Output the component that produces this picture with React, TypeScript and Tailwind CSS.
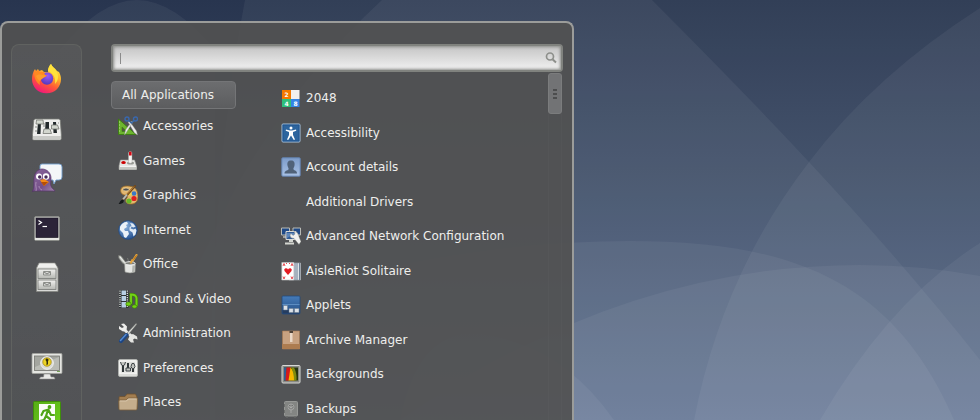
import type { ReactNode } from 'react';

interface Entry {
  label: string;
  icon?: ReactNode;
}

/* ---------- favourites (32px grid) ---------- */

const Firefox = (
  <>
    <defs>
      <linearGradient id="ff-body" x1="0.8" y1="0" x2="0.3" y2="1">
        <stop offset="0" stopColor="#fff14a" />
        <stop offset="0.35" stopColor="#ffb52a" />
        <stop offset="0.65" stopColor="#ff5a36" />
        <stop offset="1" stopColor="#f0147e" />
      </linearGradient>
      <radialGradient id="ff-globe" cx="0.55" cy="0.3" r="0.8">
        <stop offset="0" stopColor="#9a5cf5" />
        <stop offset="1" stopColor="#4b33b5" />
      </radialGradient>
    </defs>
    <path d="M1 17c0-4 1-7 3-10l1 2 2-2 1 2 3-1 2 2 4 0c0-3 1-6 3-8 1 3 4 4 6 7l2 1c1 2 2 4 2 7 0 8-6 14.300-14.500 14.300S1 25 1 17z" fill="url(#ff-body)" />
    <path d="M17 9c0-3 1-5 3-7 1 3 4 4 6 8 2 5 1 9-2 12 1-7-2-11-7-13z" fill="#ffe23c" />
    <circle cx="16" cy="16.500" r="6.200" fill="url(#ff-globe)" />
    <path d="M4 8l1 2 2-2 2 2 4 0 1 3h2c-1 2-4 2-5 4-2 1-3 3-2 6-4-3-7-8-5-15z" fill="#ff8a22" />
    <path d="M5 14c2-2 5-2 10 0-2 2-5 2-6 5-2-1-3-3-4-5z" fill="#ff9c2a" />
  </>
);

const Mixer = (
  <>
    <path d="M4.500 7h23q1.500 0 1.800 1.500l1 14v4q0 1.500-1.500 1.500h-26Q1.500 28 1.500 26.500v-4l1.300-14Q3 7 4.500 7z" fill="#eeeeec" stroke="#777a75" strokeWidth="0.8" />
    <path d="M2 24h28v2.500q0 1-1 1H3q-1 0-1-1z" fill="#c9cac7" />
    <path d="M7 10h3l-.5 12H6zM14.500 10h3.500v11h-4zM22 10h3l1 11h-3.500z" fill="#22292b" />
    <g fill="#d3d7cf" stroke="#777a75" strokeWidth="0.8">
      <path d="M5.500 8h6.500l.5 4H5zM13 17h6l1.500 4.500h-8.500zM20.500 13h6l1.500 4h-7.500z" />
    </g>
    <path d="M4 15l2 0M4 19h2M12 12h2M12 14h2M27 11h1" stroke="#888a85" />
  </>
);

const Pidgin = (
  <>
    <defs>
      <linearGradient id="pg-body" x1="0" y1="0" x2="1" y2="1">
        <stop offset="0" stopColor="#8a679a" />
        <stop offset="0.6" stopColor="#75508a" />
        <stop offset="1" stopColor="#a58bb1" />
      </linearGradient>
    </defs>
    <path d="M11 2h17q3 0 3 3v10q0 3-3 3h-3l-2 4-1-4H12q-3 0-3-3V4q0-2 2-2z" fill="#f4f6f8" stroke="#739fcf" strokeWidth="0.9" />
    <path d="M1.500 30c2-5 1-9 1.500-13 0-6 4-10 8-10 5 0 9 4 9 9 0 4-1 6 0 8 1 3 3 3 4 5H1.500z" fill="url(#pg-body)" stroke="#56356a" strokeWidth="0.7" />
    <circle cx="8" cy="14.500" r="3" fill="#fff" />
    <circle cx="15" cy="14.500" r="3.200" fill="#fff" />
    <circle cx="8.700" cy="15" r="1.700" fill="#452a57" />
    <circle cx="15" cy="15" r="1.700" fill="#452a57" />
    <path d="M9 18l4-1 5 3-5 4z" fill="#f58a16" />
    <path d="M10 20l7 0-4 4z" fill="#b54e08" />
    <path d="M5 20c-1 4 1 6 0 9M8 24c0 2 1 3 3 4" stroke="#b498bf" fill="none" strokeWidth="0.8" />
  </>
);

const Terminal = (
  <>
    <rect x="3.500" y="4.500" width="25" height="24" rx="1.500" fill="#c9cac7" stroke="#8b8d89" />
    <path d="M4 26h24v2H4z" fill="#e6e6e4" />
    <rect x="5" y="6" width="22" height="19.500" fill="#2b2338" stroke="#17121f" strokeWidth="0.6" />
    <path d="M7.500 8.500l3 2-3 2" stroke="#fff" fill="none" strokeWidth="1.200" />
    <path d="M11.500 14.500h4.500" stroke="#fff" strokeWidth="1.200" />
  </>
);

const Cabinet = (
  <>
    <defs>
      <linearGradient id="cab" x1="0" y1="0" x2="0" y2="1">
        <stop offset="0" stopColor="#f1f1ef" />
        <stop offset="1" stopColor="#b6b8b3" />
      </linearGradient>
    </defs>
    <path d="M8 1h16l3 5v23.500H5.500V6z" fill="#d8d9d6" stroke="#858782" strokeWidth="0.8" />
    <path d="M8.500 1.500h15l2.500 4H6.500z" fill="#f0f0ee" />
    <rect x="7" y="7" width="18" height="9.500" fill="url(#cab)" stroke="#777975" strokeWidth="0.8" />
    <rect x="7" y="18" width="18" height="9.500" fill="url(#cab)" stroke="#777975" strokeWidth="0.8" />
    <path d="M12.500 9.500h7v3.500h-7zM12.500 20.500h7V24h-7z" fill="#d5d6d3" stroke="#7b7d79" strokeWidth="0.8" />
    <path d="M13 10l3 2 3-2M13 21l3 2 3-2" stroke="#686a67" fill="none" strokeWidth="0.8" />
  </>
);

const LockScreen = (
  <>
    <rect x="1" y="4.500" width="30" height="20" rx="1" fill="#e4e5e1" stroke="#9fa19c" strokeWidth="0.8" />
    <rect x="3.500" y="7" width="25" height="14.500" fill="#a3a59f" stroke="#747671" strokeWidth="0.8" />
    <path d="M4 18L28 8v13H4z" fill="#b9bbb5" />
    <path d="M13 25h6l1 3h3l1 2H8.500l1-2h3z" fill="#e9e9e7" stroke="#8d8f8b" strokeWidth="0.6" />
    <circle cx="16" cy="14" r="6.300" fill="#d9dad6" stroke="#f3f3f1" />
    <circle cx="16" cy="13" r="4.200" fill="#edd426" stroke="#a88a0c" strokeWidth="0.8" />
    <path d="M14.500 11a1.500 1.500 0 1 1 2.500 1.300v3l-1.500 1v-3.500z" fill="#34300e" />
    <path d="M26 22.500h3" stroke="#6a994b" strokeWidth="0.9" />
  </>
);

const Logout = (
  <>
    <defs>
      <linearGradient id="exit" x1="0" y1="0" x2="1" y2="1">
        <stop offset="0" stopColor="#57ad17" />
        <stop offset="1" stopColor="#6ed01c" />
      </linearGradient>
    </defs>
    <rect x="2.500" y="2.500" width="27" height="27" rx="1" fill="url(#exit)" stroke="#3f8e0a" />
    <path d="M8 5h16v22H8z" fill="#fbfdf9" />
    <circle cx="18.500" cy="8" r="1.900" fill="#4fa515" />
    <path d="M17.500 10.500l-5 1.500-2 4M17 11l-2 6 4 3 0 6M15 17l-2 4-4 1M18 12l2 4 3 0" stroke="#4fa515" strokeWidth="2.200" fill="none" strokeLinecap="round" strokeLinejoin="round" />
  </>
);

/* ---------- categories (20px grid) ---------- */

const Accessories = (
  <>
    <path d="M.5 3v15.500H18z" fill="#6db52f" stroke="#3c7d12" strokeWidth="0.9" />
    <path d="M4 11v4.500h5z" fill="#50573f" stroke="#3c7d12" strokeWidth="0.6" />
    <path d="M1 6h1M1 9h1M1 12h1M1 15h1" stroke="#d5f0b8" strokeWidth="0.7" />
    <path d="M15.500 5L8 17l-1.500 2 1-5 6-8.500zM11.500 5l7 10 1 4-3-2-6.500-11z" fill="#eeeeec" stroke="#8f918d" strokeWidth="0.4" />
    <circle cx="9" cy="3" r="2" fill="none" stroke="#3968ae" strokeWidth="1.400" />
    <circle cx="17.500" cy="3" r="2" fill="none" stroke="#3968ae" strokeWidth="1.400" />
    <path d="M10.500 4.500l3 2.500 2.500-2.500" stroke="#3465a4" strokeWidth="1.300" fill="none" />
  </>
);

const Games = (
  <>
    <path d="M2.500 9h14l2 6v3.500H1V15z" fill="#e6e7e4" stroke="#9ea09c" strokeWidth="0.6" />
    <path d="M1 15h17.500v3.500H1z" fill="#c4c6c1" />
    <path d="M2 15.500h16" stroke="#fff" strokeWidth="0.8" />
    <ellipse cx="12.500" cy="12" rx="3.500" ry="1.500" fill="#969893" />
    <path d="M10.500 2q0-1.500 1.800-1.500T14 2v9.500q-1.700 1.500-3.500 0z" fill="#f4f4f2" stroke="#a1a39f" strokeWidth="0.4" />
    <path d="M11 1q1.300-1 2.600 0v3.500H11z" fill="#d40b16" />
    <ellipse cx="5.500" cy="11.500" rx="2.300" ry="1.500" fill="#cc0000" />
  </>
);

const Graphics = (
  <>
    <path d="M3 4c1-3 5-3.500 10-2.500 5 .5 7 5 7 10s-3 8-8 7.500c-5-.5-5-4-3-6 1-2-1-3-3-3C3 9 2 6 3 4z" fill="#e2b66f" stroke="#9b6b24" strokeWidth="0.8" />
    <ellipse cx="8" cy="4.500" rx="3" ry="1.500" fill="#4e5052" stroke="#f4d99f" strokeWidth="0.7" />
    <circle cx="16" cy="8.500" r="2.300" fill="#3979c8" />
    <circle cx="16" cy="13.500" r="2.600" fill="#dc2020" />
    <circle cx="11" cy="16" r="2.600" fill="#66b82a" />
    <circle cx="12" cy="9" r="1.700" fill="#f2d648" />
    <path d="M17 1L5 14.500" stroke="#72481a" strokeWidth="2" strokeLinecap="round" />
    <path d="M16 1.500L9 9.500" stroke="#d59a4a" strokeWidth="0.7" />
    <path d="M9 9.500l-4 5" stroke="#b9bcb7" strokeWidth="2" />
    <path d="M5.500 14.500c1 3-1 4.500-5 4.500 1.500-1 1-4 5-4.500z" fill="#171b1c" />
  </>
);

const Internet = (
  <>
    <defs>
      <radialGradient id="globe" cx="0.35" cy="0.3" r="0.8">
        <stop offset="0" stopColor="#8cb3df" />
        <stop offset="1" stopColor="#1d4a8a" />
      </radialGradient>
    </defs>
    <circle cx="10" cy="10" r="9.300" fill="url(#globe)" stroke="#204a87" strokeWidth="0.8" />
    <path d="M2 7c1-3 4-5 7-5.300L10 4 8 5l1 2-3 2 1 2 3 0 1 3-3 4-2-1-1-4-3-3z" fill="#eaf1f8" />
    <path d="M12 3l3 .5 2.500 3-2 1-2-1-1 2 3 1 2-1 1 2-1 4-2 2-1-4-3-2 0-3 2-2z" fill="#e1ebf5" />
  </>
);

const Office = (
  <>
    <path d="M.5 1.500q2-.5 3 1l4.500 6-1.500 2q-3-2-4-4Q0 4 .5 1.500z" fill="#bfc2bd" stroke="#72746f" strokeWidth="0.7" />
    <path d="M2 3l5 6" stroke="#f0f0ee" />
    <path d="M18.500 1l-6 9" stroke="#e0a13d" strokeWidth="2.200" strokeLinecap="round" />
    <path d="M18.500 1.500l-3 4" stroke="#b36b12" />
    <path d="M9.500 4l1.500 5" stroke="#777975" />
    <path d="M6.500 9q5.500-2 11 0l-.5 9q-5 2-10 0z" fill="#e4e5e2" stroke="#8d8f8a" strokeWidth="0.6" />
    <ellipse cx="12" cy="9.300" rx="5" ry="1.700" fill="#7c7e79" stroke="#fafafa" strokeWidth="0.8" />
    <path d="M12.500 9.500l2-4" stroke="#e0a13d" strokeWidth="2" />
    <path d="M14.500 11.500l-.5 7 2.500-1 .5-6z" fill="#b0b2ad" />
  </>
);

const SoundVideo = (
  <>
    <rect x="1" y="1" width="9.500" height="18" fill="#2e3436" />
    <path d="M3.500 1.500H8V6H3.500zM3.500 7H8v5H3.500zM3.500 13H8v5.500H3.500z" fill="#b7cfe5" />
    <path d="M2 1.500v17M9.300 1.500v17" stroke="#eeeeec" strokeWidth="1.200" strokeDasharray="1.200 1" />
    <path d="M13 15.500V5.500q5 0 5.500 3.500v8" stroke="#3c8205" strokeWidth="3.200" fill="none" />
    <path d="M13 15V5.500q5 0 5.500 3.500v8" stroke="#73d216" strokeWidth="1.900" fill="none" />
    <ellipse cx="10.500" cy="15" rx="2.700" ry="2" fill="#73d216" stroke="#3c8205" strokeWidth="0.7" />
    <ellipse cx="16.500" cy="17.500" rx="2.500" ry="1.700" fill="#73d216" stroke="#3c8205" strokeWidth="0.7" />
  </>
);

const Administration = (
  <>
    <path d="M5 5.500l11 10" stroke="#e7e8e6" strokeWidth="3" />
    <path d="M3 1l3-.5 3 3-.5 4-3.500 1-4-2.500V3l3 2 2-1z" fill="#eeeeec" />
    <path d="M12 12l3-1 4 2.500.5 3-3-1-1.500 1 1 3-3 0-3-3z" fill="#e3e4e1" />
    <path d="M19 1l-1-.5-9 9.500 1.500 1.500z" fill="#d5d7d3" stroke="#686b67" strokeWidth="0.5" />
    <path d="M8.500 12L3 18" stroke="#1d4684" strokeWidth="4" strokeLinecap="round" />
    <path d="M8 11.500l-5.500 6" stroke="#5489cf" strokeWidth="1.500" strokeLinecap="round" />
  </>
);

const Preferences = (
  <>
    <rect x=".5" y="1.500" width="19" height="17" rx="1.500" fill="#f0f0ee" stroke="#b4b6b2" strokeWidth="0.8" />
    <path d="M3 4h14v10.500H3z" fill="#dcddda" />
    <path d="M5 5v9M10 5v8M15 5v9" stroke="#303638" strokeWidth="2" />
    <path d="M2.500 4l1 3q1.500 1.500 3 0l1-3M8 13h4.500v-3H8zM13 8.500l1-3h2l1 3-1 2h-2z" fill="#c1c3bf" stroke="#41474a" />
    <path d="M1 17h18" stroke="#c8cac6" />
  </>
);

const Places = (
  <>
    <path d="M1 5.500q0-1 1-1h5l2-2.500h8q1 0 1 1l1 2V17H1z" fill="#a37e50" stroke="#6f522e" strokeWidth="0.8" />
    <path d="M2 8h6l2-2h8.500q1 0 1 1L19 17q0 1-1 1H2q-1 0-1-1L.8 9q0-1 1.200-1z" fill="#c4ad8c" stroke="#7b613f" strokeWidth="0.8" />
    <path d="M2 9h6.500l2-2H18.500" stroke="#e2d1b7" strokeWidth="0.7" fill="none" />
  </>
);

/* ---------- applications (20px grid) ---------- */

const G2048 = (
  <>
    <path d="M1 2h9v9H1z" fill="#f57900" />
    <path d="M10 2h8.500v9H10z" fill="#f2f0ee" />
    <path d="M1 11h9v8H1z" fill="#2fbf7c" />
    <path d="M10 11h8.500v8H10z" fill="#3584e4" />
    <g fill="#fff" className="font-['DejaVu_Sans',sans-serif] text-[6px] font-bold" textAnchor="middle">
      <text x="5.500" y="8.500">2</text>
      <text x="5.500" y="17.500">4</text>
      <text x="14.500" y="17.500">8</text>
    </g>
  </>
);

const Accessibility = (
  <>
    <rect x="1" y="1" width="18" height="18" rx="1" fill="#2d659e" stroke="#a7c3df" />
    <rect x="2" y="2" width="16" height="16" fill="none" stroke="#1d4f86" strokeWidth="0.7" />
    <circle cx="10" cy="5" r="1.500" fill="#fff" />
    <path d="M5 6.500l4 1h2l4-1 .3 1.200L12 9v3l2 4.500-1.200.5-2.800-4.500L7.200 17 6 16.500 8 12V9L4.700 7.700z" fill="#fff" />
  </>
);

const Account = (
  <>
    <defs>
      <linearGradient id="acct" x1="0" y1="0" x2="0" y2="1">
        <stop offset="0" stopColor="#7d9cca" />
        <stop offset="1" stopColor="#a8c1e5" />
      </linearGradient>
    </defs>
    <rect x=".8" y=".8" width="18.400" height="18.400" rx="1" fill="url(#acct)" stroke="#6382b0" />
    <path d="M10 3.500c3 0 4 2 3.500 5-.3 2-1.500 2.500-1 4 1 1 3.500 1 3.500 4H3.500c0-3 3-3 4-4 .5-1.500-.7-2-1-4-.5-3 .5-5 3.500-5z" fill="#506279" />
  </>
);

const Network = (
  <>
    <path d="M.5 2h8v7h-8zM12 2h7.500v7H12z" fill="#204a87" stroke="#b8bab5" />
    <path d="M2 11h3M13 10h5" stroke="#eeeeec" />
    <path d="M5 5.500h10v8H5z" fill="#315b95" stroke="#d9dad7" />
    <path d="M6 7h8v3q-4-1-8 2z" fill="#5d86bb" />
    <path d="M8 14h4v2H8zM4 16.500h9v2H4z" fill="#d3d5d0" />
    <path d="M10 7.500l2 2 2-1.500-1-2.500q4 0 4.500 4l2.500 6-2 3-5-6q-4 0-4-3.500z" fill="#f1f1ef" stroke="#777975" strokeWidth="0.4" />
  </>
);

const Solitaire = (
  <>
    <path d="M8 2h11.500v17H8z" fill="#dfe3e8" stroke="#a8afb6" strokeWidth="0.6" />
    <path d="M14 2v17M16 2v17M18.500 2v17" stroke="#60758b" strokeWidth="0.9" />
    <path d="M.8 1.500h12V19H.8z" fill="#fff" stroke="#c2c2c2" strokeWidth="0.6" />
    <path d="M7 14L3.500 10q-1-2 1-2.800Q6.500 7 7 8.500q.8-1.500 2.500-1.300 2 .8 1 2.800z" fill="#e51c23" />
    <path d="M2 5l1-2.500L4 5M10 5l1-2.500L12 5M2 15.500L3 18l1-2.500M10 15.500l1 2.500 1-2.500M5 2.500h1M8 2.500h1" stroke="#e5393f" fill="none" strokeWidth="0.9" />
  </>
);

const Applets = (
  <>
    <defs>
      <linearGradient id="applet" x1="0" y1="0" x2="0" y2="1">
        <stop offset="0" stopColor="#457bb8" />
        <stop offset="1" stopColor="#264f86" />
      </linearGradient>
    </defs>
    <rect x="1" y="1" width="18" height="18" rx="1" fill="url(#applet)" stroke="#244a7a" strokeWidth="0.8" />
    <path d="M1.500 9h17v1h-17z" fill="#5c8dc2" />
    <path d="M1.500 15h17v3.500h-17z" fill="#253d60" />
    <path d="M2.500 10.500h4v4.500h-4zM8 13.500h4.300v4H8zM13.500 13.500H18v4h-4.500z" fill="#dbe1e8" stroke="#6b7d91" strokeWidth="0.5" />
  </>
);

const Archive = (
  <>
    <path d="M1.500 1h17v18h-17z" fill="#c8a281" stroke="#aa7a51" strokeWidth="0.6" />
    <path d="M1 14h18v5H1z" fill="#ad7c50" />
    <path d="M9 1h2.500v11H9z" fill="#ead8c7" />
    <path d="M8.500 1h3.500v2H8.500z" fill="#4e4237" />
  </>
);

const Backgrounds = (
  <>
    <rect x="1" y="1.500" width="18" height="17.500" rx="1" fill="#888a85" stroke="#d8d9d6" />
    <path d="M3 3.500h14v13H3z" fill="#27350f" />
    <path d="M3 3.500h3l-1 13H3z" fill="#315d91" />
    <path d="M5.500 3.500H10l-2 13H4.500z" fill="#d61919" />
    <path d="M9.500 3.500q5 5 4 13h-6z" fill="#f6b900" />
    <path d="M10 3.500h3q3 6 2.500 13h-2.500q0-8-3-13z" fill="#7f8c10" />
  </>
);

const Backups = (
  <>
    <rect x="3.500" y="2.500" width="13" height="14.500" rx="1" fill="#838583" stroke="#969896" />
    <path d="M5 17h2v1.500H5zM13 17h2v1.500h-2zM3 5h1v3H3zM3 11h1v3H3z" fill="#6c6e6c" />
    <circle cx="10" cy="8" r="3" fill="#6f716f" stroke="#a8aaa8" strokeWidth="0.8" />
    <path d="M10 5v6M7.500 7l5 2.500M12.500 7l-5 2.500M10 11v3" stroke="#b1b3b1" strokeWidth="0.7" />
  </>
);

const favourites: Entry[] = [
  { label: 'Firefox', icon: Firefox },
  { label: 'System Settings', icon: Mixer },
  { label: 'Pidgin', icon: Pidgin },
  { label: 'Terminal', icon: Terminal },
  { label: 'Files', icon: Cabinet },
];

const session: Entry[] = [
  { label: 'Lock Screen', icon: LockScreen },
  { label: 'Logout', icon: Logout },
];

const categories: Entry[] = [
  { label: 'Accessories', icon: Accessories },
  { label: 'Games', icon: Games },
  { label: 'Graphics', icon: Graphics },
  { label: 'Internet', icon: Internet },
  { label: 'Office', icon: Office },
  { label: 'Sound & Video', icon: SoundVideo },
  { label: 'Administration', icon: Administration },
  { label: 'Preferences', icon: Preferences },
  { label: 'Places', icon: Places },
];

const applications: Entry[] = [
  { label: '2048', icon: G2048 },
  { label: 'Accessibility', icon: Accessibility },
  { label: 'Account details', icon: Account },
  { label: 'Additional Drivers' },
  { label: 'Advanced Network Configuration', icon: Network },
  { label: 'AisleRiot Solitaire', icon: Solitaire },
  { label: 'Applets', icon: Applets },
  { label: 'Archive Manager', icon: Archive },
  { label: 'Backgrounds', icon: Backgrounds },
  { label: 'Backups', icon: Backups },
];

function Wallpaper() {
  return (
    <svg viewBox="0 0 980 420" preserveAspectRatio="none" className="absolute inset-0 h-full w-full" aria-hidden="true">
      <defs>
        <linearGradient id="sky" x1="0" y1="0" x2="0" y2="1">
          <stop offset="0" stopColor="#28354f" />
          <stop offset="0.4" stopColor="#394963" />
          <stop offset="1" stopColor="#526688" />
        </linearGradient>
      </defs>
      <rect width="980" height="420" fill="url(#sky)" />
      <g fill="#fff" fillOpacity="0.05">
        <path d="M245 0Q210 180 210 420H980V0z" />
        <path d="M60 50Q100 0 137 0T215 50V420H60z" />
        <path d="M382 0Q300 75 240 180L120 420H980V360Q905 265 809 162Q740 88 652 0z" />
        <path d="M980 8Q875 75 809 162Q722 275 694 420H980z" />
        <path d="M300 290Q470 241 630 241C800 241 895 285 954 420H300z" />
        <path d="M400 420Q620 265 860 265Q920 265 980 276V420z" />
        <path d="M980 243Q890 300 820 420H980z" />
        <path d="M400 420Q420 320 490 335Q565 350 614 420z" />
      </g>
    </svg>
  );
}

function SideButton({ entry }: { entry: Entry }) {
  return (
    <button type="button" aria-label={entry.label} className="size-8">
      <svg viewBox="0 0 32 32" className="size-8">{entry.icon}</svg>
    </button>
  );
}

function MenuList({ entries }: { entries: Entry[] }) {
  return (
    <ul>
      {entries.map(entry => (
        <li key={entry.label} className="h-[34px] even:h-[35px]">
          <button type="button" className="flex h-full w-full items-center gap-[5px] whitespace-nowrap text-left">
            <svg viewBox="0 0 20 20" className="size-5 shrink-0" aria-hidden="true">{entry.icon}</svg>
            {entry.label}
          </button>
        </li>
      ))}
    </ul>
  );
}

export default function App() {
  return (
    <main className="relative h-screen overflow-hidden bg-[#526688] pt-[21px] font-['DejaVu_Sans',sans-serif] text-xs text-[#eeeeec]">
      <Wallpaper />

      <div className="relative flex min-h-full w-[574px] max-w-full items-stretch rounded-t-lg border-2 border-b-0 border-[#9b9c9a] bg-[#515151]/92 pt-[21px] pr-[9px] pl-[9px]">
        <nav aria-label="Favorites" className="flex w-[71px] shrink-0 flex-col items-center gap-[18px] rounded-t-lg border border-b-0 border-[#606260] bg-linear-to-b from-white/4 to-white/0 pt-[17px]">
          {favourites.map(entry => <SideButton key={entry.label} entry={entry} />)}
          <div className="mt-[37px] flex flex-col gap-[18px]">
            {session.map(entry => <SideButton key={entry.label} entry={entry} />)}
          </div>
        </nav>

        <section className="ml-[29px] flex min-w-0 flex-1 flex-col">
          <label className="flex h-7 shrink-0 items-center rounded border-2 border-[#80827e] bg-linear-to-b from-[#c4c4c4] to-[#f2f2f2] pr-1 pl-[7px] shadow-[inset_0_0_3px_1px_#8a8c88]">
            <span className="h-[11px] w-px bg-[#8b8b8b]" />
            <input type="text" aria-label="Search applications" className="min-w-0 flex-1 bg-transparent px-1 text-[#444] outline-none" />
            <svg viewBox="0 0 12 12" className="size-3" fill="none" stroke="#8d8f8b" aria-hidden="true">
              <circle cx="5" cy="4.500" r="3.500" strokeWidth="1.700" />
              <path d="M7.500 7.200l3.500 3.300" strokeWidth="2" />
            </svg>
          </label>

          <div className="flex flex-1">
            <div className="w-[125px] shrink-0 pt-[9px]">
              <button type="button" className="h-7 w-full rounded border border-[#747577] bg-linear-to-b from-[#6c6d6f] to-[#5c5d5f] pl-[10px] text-left">
                All Applications
              </button>
              <div className="pl-[7px]">
                <MenuList entries={categories} />
              </div>
            </div>

            <div className="ml-[45px] min-w-0 flex-1 pt-[9px]">
              <MenuList entries={applications} />
            </div>

            <div className="mr-px w-[14px] border-x border-white/2 pt-px">
              <div className="-mx-px flex h-[41px] flex-col items-center justify-center gap-0.5 rounded-[3px] border border-[#7b7c7d] bg-[#727375]">
                <span className="h-0.5 w-1 bg-[#4c4d4e]" />
                <span className="h-0.5 w-1 bg-[#4c4d4e]" />
                <span className="h-0.5 w-1 bg-[#4c4d4e]" />
              </div>
            </div>
          </div>
        </section>
      </div>
    </main>
  );
}
